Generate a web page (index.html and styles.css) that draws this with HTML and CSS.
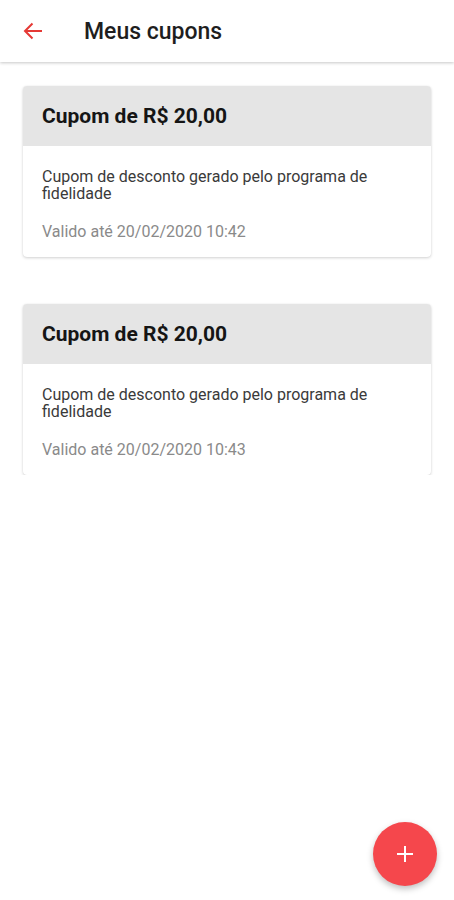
FILE: index.html
```html
<!DOCTYPE html>
<html lang="pt-BR">
<head>
<meta charset="utf-8">
<title>Meus cupons</title>
<link rel="stylesheet" href="styles.css">
</head>
<body>
<header class="appbar">
  <button class="back" aria-label="Voltar">
    <svg width="20" height="18" viewBox="0 0 20 18"><path d="M19 9H2M9.5 1.5L2 9l7.5 7.5" fill="none" stroke="#e53935" stroke-width="2"/></svg>
  </button>
  <h1 class="title">Meus cupons</h1>
</header>
<main class="list">
  <section class="card">
    <div class="card-head">Cupom de R$ 20,00</div>
    <div class="card-body">
      <p class="desc">Cupom de desconto gerado pelo programa de fidelidade</p>
      <p class="date">Valido até 20/02/2020 10:42</p>
    </div>
  </section>
  <section class="card">
    <div class="card-head">Cupom de R$ 20,00</div>
    <div class="card-body">
      <p class="desc">Cupom de desconto gerado pelo programa de fidelidade</p>
      <p class="date">Valido até 20/02/2020 10:43</p>
    </div>
  </section>
</main>
<button class="fab" aria-label="Adicionar">
  <svg width="18" height="18" viewBox="0 0 18 18"><path d="M9 1v16M1 9h16" stroke="#fff" stroke-width="2"/></svg>
</button>
</body>
</html>
```
FILE: styles.css
```css
html, body {
  margin: 0;
  padding: 0;
  background: #ffffff;
  font-family: Roboto, "Noto Sans", sans-serif;
  color: #1c1c1c;
}
.appbar {
  height: 62px;
  display: flex;
  align-items: center;
  background: #fff;
  box-shadow: 0 1px 3px rgba(0,0,0,0.22);
  position: relative;
  z-index: 1;
}
.back {
  border: 0;
  background: none;
  padding: 0;
  margin-left: 23px;
  width: 20px;
  height: 18px;
  display: flex;
  align-items: center;
}
.title {
  margin: 0 0 0 41px;
  font-size: 23px;
  font-weight: 500;
  color: #1e1e1e;
}
.list {
  padding: 24px 23px 0 23px;
  display: flex;
  flex-direction: column;
  gap: 47px;
}
.card {
  border-radius: 4px;
  background: #fff;
  box-shadow: 0 1px 3px rgba(0,0,0,0.18), 0 0 1px rgba(0,0,0,0.08);
  overflow: hidden;
}
.card-head {
  height: 60px;
  background: #e5e5e5;
  display: flex;
  align-items: center;
  padding-left: 19px;
  font-size: 21px;
  font-weight: 700;
  color: #151515;
}
.card-body {
  padding: 22px 19px 17px 19px;
}
.desc {
  margin: 0;
  font-size: 16px;
  line-height: 17px;
  color: #3a3a3a;
}
.date {
  margin: 21px 0 0 0;
  font-size: 16px;
  line-height: 17px;
  color: #8a8a8a;
}
.fab {
  position: fixed;
  right: 17px;
  bottom: 14px;
  width: 64px;
  height: 64px;
  border-radius: 50%;
  border: 0;
  background: #f5474c;
  box-shadow: 0 3px 6px rgba(0,0,0,0.25);
  display: flex;
  align-items: center;
  justify-content: center;
  padding: 0;
}
```
